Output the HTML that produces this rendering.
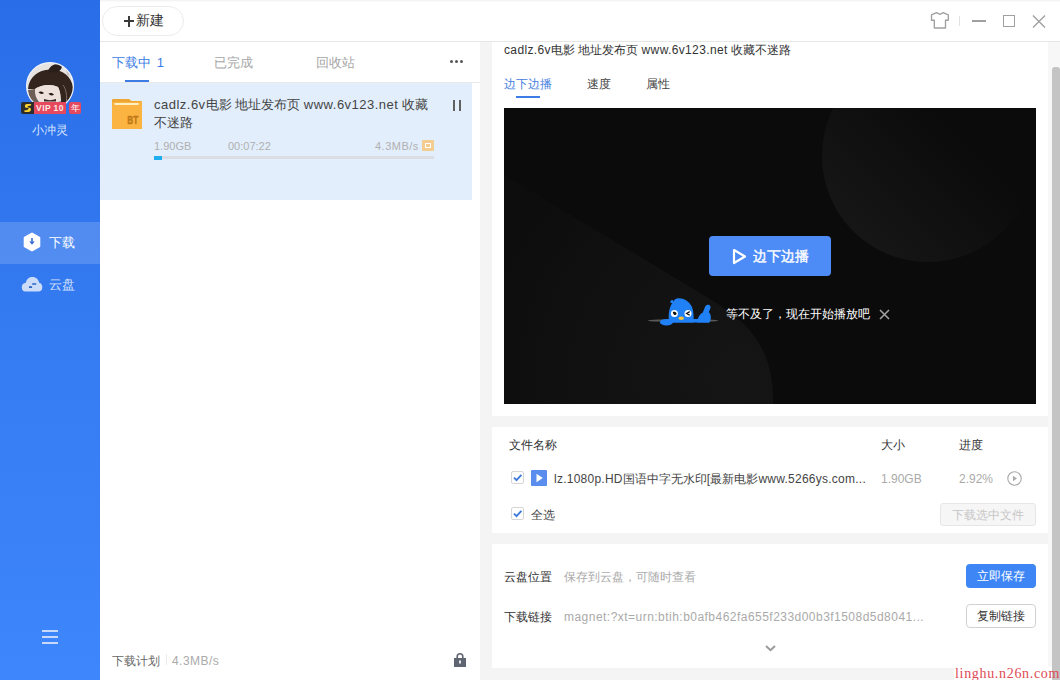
<!DOCTYPE html>
<html><head><meta charset="utf-8">
<style>
*{margin:0;padding:0;box-sizing:border-box}
html,body{width:1060px;height:680px;overflow:hidden;background:#fff;font-family:"Liberation Sans",sans-serif;}
.a{position:absolute;white-space:nowrap}
#side{position:absolute;left:0;top:0;width:100px;height:680px;background:linear-gradient(180deg,#296ee8 0%,#367cf2 55%,#3e86fb 100%)}
#hdr{position:absolute;left:100px;top:0;width:960px;height:42px;background:linear-gradient(180deg,#f0f0f0 0px,#f8f8f8 1px,#fff 2.5px,#fff 100%);border-bottom:1px solid #e6e6e6}
#mid{position:absolute;left:100px;top:42px;width:380px;height:638px;background:#fff}
#right{position:absolute;left:480px;top:42px;width:580px;height:638px;background:#f4f4f4;overflow:hidden}
.card{position:absolute;left:12px;width:556px;background:#fff}
.card>.a{margin-left:-1px}
</style></head><body>

<!-- SIDEBAR -->
<div id="side">
  <svg class="a" style="left:26px;top:62px" width="48" height="48" viewBox="0 0 48 48">
    <defs><clipPath id="cc"><circle cx="24" cy="24" r="23.5"/></clipPath></defs>
    <g clip-path="url(#cc)">
      <rect width="48" height="48" fill="#e7e3e1"/>
      <path d="M2 27 C3 15 12 8 24 7.5 C36 7 45 14 47 25 L47 48 L34 48 C36 40 35 31 32 25 C26 22 16 22 9 27 Z" fill="#33241e"/>
      <path d="M22 10 C23 4 29 1 35 2.5 C37 5 35 9 30 10.5 Z" fill="#2a1f1b"/>
      <path d="M40 6 C43 8 45 11 46 14 L41 13 Z" fill="#c9c2be"/>
      <path d="M9 27 C16 22 26 22 32 25 C34.5 30 35 35 33 39 C29 41 19 41 14 40 C11 36 8.5 32 9 27 Z" fill="#eee1db"/>
      <path d="M2 28 L9 27 C8.5 32 10 36 13 40 L4 40 Z" fill="#6e5e56"/>
      <path d="M12.5 30 C14.5 29 16.5 29.5 18 31 C16.5 32.3 14 32.3 12.5 30 Z" fill="#221816"/>
      <path d="M22.5 31.5 C24.5 30.5 26.8 31 28 32.5 C26.5 33.8 24 33.8 22.5 31.5 Z" fill="#221816"/>
      <path d="M18 37 C22 38.5 26 38.5 30 37 L30 39.5 L18 39.5 Z" fill="#3a2a26"/>
      <path d="M3 39 C12 41.5 28 42 42 38 L46 48 L2 48 Z" fill="#2a201d"/>
      <path d="M37 23 C40 27 41.5 34 40 42" stroke="#7d6d65" stroke-width="1" fill="none"/>
    </g>
    <circle cx="24" cy="24" r="23.4" fill="none" stroke="#eef3fb" stroke-width="1.2"/>
  </svg>
  <div class="a" style="left:21px;top:102px;width:13px;height:12px;background:#2d2d2d;border-radius:2px 0 0 2px"></div>
  <svg class="a" style="left:23px;top:103px" width="10" height="10" viewBox="0 0 10 10"><path d="M8.2 1 H4 Q1.8 1 1.8 3 Q1.8 5 4 5 H5.5 Q6 5 5.6 5.6 L4.8 6.6 Q4.4 7.2 3.8 7.2 H1.5 L1.5 9 H5.2 Q7.6 9 8 6.8 Q8.2 4.8 6 4.6 H4.6 Q4 4.6 4.4 4 L5 3.3 Q5.4 2.8 6 2.8 H7.7 Z" fill="#ffd42e"/></svg>
  <div class="a" style="left:34px;top:102px;width:32px;height:12px;background:#e6485d;color:#fff;font:bold 8.5px/12px 'Liberation Sans',sans-serif;text-align:center;letter-spacing:0.4px;color:#fde8e8">VIP 10</div>
  <div class="a" style="left:69px;top:102px;width:12px;height:12px;background:#e6485d;border-radius:2px;color:#fff;font-size:9px;line-height:12px;text-align:center">年</div>
  <div class="a" style="left:0;top:122px;width:100px;text-align:center;color:#dbe7ff;font-size:12px;line-height:17px">小冲灵</div>

  <div class="a" style="left:0;top:222px;width:100px;height:42px;background:rgba(255,255,255,0.16)"></div>
  <svg class="a" style="left:23px;top:232px" width="18" height="20" viewBox="0 0 18 20">
    <path d="M9 2 L16 5.8 L16 14.2 L9 18 L2 14.2 L2 5.8 Z" fill="#fff" stroke="#fff" stroke-width="2.6" stroke-linejoin="round"/>
    <path d="M9 6 V10.5" stroke="#3a6cd2" stroke-width="1.6" fill="none"/><path d="M6.2 9.6 L11.8 9.6 L9 12.8 Z" fill="#3a6cd2"/>
  </svg>
  <div class="a" style="left:49px;top:234px;color:#fff;font-size:13px;line-height:17px">下载</div>

  <svg class="a" style="left:21px;top:276px" width="22" height="16" viewBox="0 0 22 16">
    <path d="M4.5 15.6 C1.8 15.6 0.8 13.5 0.8 11.2 C0.8 8.6 2.6 7 4.8 6.8 C5.6 3 8.3 1 11.5 1 C15 1 17.6 3.3 18.1 6.8 C20.3 7.2 21.4 9.2 21.3 11.5 C21.2 14 19.8 15.6 17.5 15.6 Z" fill="#cbdcf9"/>
    <path d="M11.2 8 H15.2 M8 11.1 H11.1" stroke="#2f63c4" stroke-width="1.6"/>
  </svg>
  <div class="a" style="left:49px;top:276px;color:#d3e2fc;font-size:13px;line-height:17px">云盘</div>

  <div class="a" style="left:42px;top:630px;width:16px;height:1.5px;background:#c6d9fb"></div>
  <div class="a" style="left:42px;top:636px;width:16px;height:1.5px;background:#c6d9fb"></div>
  <div class="a" style="left:42px;top:642px;width:16px;height:1.5px;background:#c6d9fb"></div>
</div>

<!-- HEADER -->
<div id="hdr">
  <div class="a" style="left:2px;top:6px;width:82px;height:30px;border:1px solid #ececec;border-radius:15px"></div>
  <div class="a" style="left:24px;top:20px;width:10px;height:1.6px;background:#3a3a3a"></div>
  <div class="a" style="left:28.2px;top:16px;width:1.6px;height:10.5px;background:#3a3a3a"></div>
  <div class="a" style="left:36px;top:11px;color:#333;font-size:14px;line-height:19px">新建</div>

  <svg class="a" style="left:830px;top:11px" width="20" height="19" viewBox="0 0 20 19">
    <path d="M6.6 1.6 Q9.9 4.8 13.2 1.6 L18.3 3.8 L18.3 9.2 L15.5 9.2 L15.5 17 L4.3 17 L4.3 9.2 L1.5 9.2 L1.5 3.8 Z" fill="none" stroke="#a0a0a0" stroke-width="1.35" stroke-linejoin="round"/>
  </svg>
  <div class="a" style="left:859px;top:16px;width:1px;height:10px;background:#e2e2e2"></div>
  <div class="a" style="left:871.5px;top:20.3px;width:14.5px;height:1.4px;background:#a0a0a0"></div>
  <div class="a" style="left:903px;top:15px;width:12px;height:12px;border:1.4px solid #a0a0a0"></div>
  <svg class="a" style="left:932px;top:15px" width="14" height="13" viewBox="0 0 14 13"><path d="M1 0.5 L13 12.5 M13 0.5 L1 12.5" stroke="#a0a0a0" stroke-width="1.4"/></svg>
</div>

<!-- MIDDLE -->
<div id="mid">
  <div class="a" style="left:0;top:0;width:380px;height:41px;border-bottom:1px solid #e9e9e9"></div>
  <div class="a" style="left:12px;top:12px;color:#3d7ce4;font-size:13px;line-height:17px">下载中 <span style="margin-left:2px">1</span></div>
  <div class="a" style="left:25px;top:38px;width:24px;height:2px;background:#3d7ce4"></div>
  <div class="a" style="left:114px;top:12px;color:#a6a6a6;font-size:13px;line-height:17px">已完成</div>
  <div class="a" style="left:216px;top:12px;color:#a6a6a6;font-size:13px;line-height:17px">回收站</div>
  <div class="a" style="left:350px;top:18px;width:3px;height:3px;background:#555;border-radius:2px"></div>
  <div class="a" style="left:355px;top:18px;width:3px;height:3px;background:#555;border-radius:2px"></div>
  <div class="a" style="left:360px;top:18px;width:3px;height:3px;background:#555;border-radius:2px"></div>

  <div class="a" style="left:0;top:41px;width:372px;height:117px;background:#e2eefc"></div>
  <svg class="a" style="left:12px;top:57px" width="30" height="30" viewBox="0 0 30 30">
    <path d="M0 1 Q0 0 1 0 H17 L19.5 2 H29 Q30 2 30 3 V29 Q30 30 29 30 H1 Q0 30 0 29 Z" fill="#eea532"/>
    <rect x="0" y="3" width="30" height="27" rx="0.5" fill="#fbb442"/>
    <rect x="2.5" y="4" width="24" height="2" fill="#fff0c4"/>
    <text x="0" y="0" style="font-family:'Liberation Sans';font-weight:700;font-size:10.5px" fill="#bf7816" stroke="#bf7816" stroke-width="0.4" text-anchor="middle" transform="translate(20.8,25.3) scale(0.78,1)">BT</text>
  </svg>
  <div class="a" style="left:54px;top:54px;color:#444;font-size:13px;line-height:18px"><span style="letter-spacing:0.49px">cadlz.6v</span>电影 地址发布页 <span style="letter-spacing:0.49px">www.6v123.net</span> 收藏<br>不迷路</div>
  <div class="a" style="left:54px;top:97px;color:#b0b0b0;font-size:11px;line-height:14px">1.90GB</div>
  <div class="a" style="left:128px;top:97px;color:#b0b0b0;font-size:11px;line-height:14px">00:07:22</div>
  <div class="a" style="left:275px;top:97px;color:#b0b0b0;font-size:11px;line-height:14px;letter-spacing:0.5px">4.3MB/s</div>
  <div class="a" style="left:322px;top:98px;width:12px;height:11px;background:#f3cd90;border-radius:1px"></div>
  <div class="a" style="left:325px;top:101px;width:6px;height:5px;border:1px solid #fff"></div>
  <div class="a" style="left:54px;top:114px;width:280px;height:3px;background:#dadee4"></div>
  <div class="a" style="left:54px;top:114px;width:8px;height:3.5px;background:#1eaef0"></div>
  <div class="a" style="left:352.5px;top:58px;width:2.2px;height:11px;background:#606060"></div>
  <div class="a" style="left:359.3px;top:58px;width:2.2px;height:11px;background:#606060"></div>

  <div class="a" style="left:12px;top:611px;color:#666;font-size:12px;line-height:16px">下载计划</div>
  <div class="a" style="left:66px;top:612px;width:1px;height:11px;background:#ececec"></div>
  <div class="a" style="left:72px;top:611px;color:#aaa;font-size:12px;line-height:16px;letter-spacing:0.45px">4.3MB/s</div>
  <svg class="a" style="left:353px;top:610px" width="14" height="16" viewBox="0 0 14 16">
    <path d="M4.2 6.5 V4.6 A2.8 2.8 0 0 1 9.8 4.6 V6.5" stroke="#5f6672" stroke-width="1.6" fill="none"/>
    <rect x="1" y="6" width="12" height="9" fill="#5f6672"/>
    <rect x="6" y="8.5" width="2" height="3" fill="#e8eaf0"/>
  </svg>
</div>

<!-- RIGHT -->
<div id="right">
  <div class="card" style="top:-10px;height:384px">
    <div class="a" style="left:13px;top:10px;color:#333;font-size:12px;line-height:17px"><span style="letter-spacing:0.36px">cadlz.6v</span>电影 地址发布页 <span style="letter-spacing:0.36px">www.6v123.net</span> 收藏不迷路</div>
    <div class="a" style="left:13px;top:44px;color:#4580e0;font-size:12px;line-height:17px">边下边播</div>
    <div class="a" style="left:25px;top:64px;width:24px;height:2px;background:#3d7ce4"></div>
    <div class="a" style="left:96px;top:44px;color:#444;font-size:12px;line-height:17px">速度</div>
    <div class="a" style="left:155px;top:44px;color:#444;font-size:12px;line-height:17px">属性</div>

    <div class="a" style="left:13px;top:76px;width:532px;height:296px;background:#0b0b0b;overflow:hidden">
      <svg class="a" style="left:0;top:0" width="532" height="296" viewBox="0 0 532 296">
        <defs>
          <linearGradient id="g1" x1="0.1" y1="0.9" x2="0.8" y2="0.2"><stop offset="0" stop-color="#171717"/><stop offset="0.75" stop-color="#0b0b0b"/><stop offset="1" stop-color="#0b0b0b"/></linearGradient>
          <radialGradient id="g2" gradientUnits="userSpaceOnUse" cx="235" cy="270" r="260"><stop offset="0" stop-color="#151515"/><stop offset="0.6" stop-color="#111111"/><stop offset="1" stop-color="#0d0d0d"/></radialGradient>
        </defs>
        <circle cx="424" cy="48" r="106" fill="url(#g1)"/>
        <path d="M0 67 L206 191 C250 217 270 245 269 296 L0 296 Z" fill="url(#g2)"/>
      </svg>
      <div class="a" style="left:205px;top:128px;width:122px;height:40px;background:#4d8bf6;border-radius:4px"></div>
      <svg class="a" style="left:228px;top:140px" width="15" height="17" viewBox="0 0 15 17"><path d="M2 2 L13 8.5 L2 15 Z" fill="none" stroke="#fff" stroke-width="2.2" stroke-linejoin="round"/></svg>
      <div class="a" style="left:249px;top:139px;color:#fff;font-size:14px;line-height:19px;-webkit-text-stroke:0.35px #fff">边下边播</div>

      <svg class="a" style="left:143px;top:188px" width="72" height="32" viewBox="0 0 72 32">
        <ellipse cx="36" cy="24.6" rx="35.5" ry="1.4" fill="#585858"/>
        <path d="M22 26.5 C21 18 22.5 10 26 6 C27 4 28 3 30 2.5 C35.5 1.5 42 5 45 11 C46.6 15 46.9 21 46.6 26.5 Z" fill="#2080f6"/>
        <path d="M23.5 7 C23 5 24 3.5 25.5 4 C26.5 4.5 26.5 6 26 7 Z" fill="#2080f6"/>
        <ellipse cx="19.5" cy="26.2" rx="6.5" ry="3.3" fill="#2080f6"/>
        <rect x="24" y="23" width="38" height="3.5" fill="#2080f6"/>
        <path d="M49.8 26.5 C50.8 21.5 52.6 18.2 55.8 16.6 L58.2 10.6 C59.2 8.6 62 8.3 63.2 9.7 C64.2 11.3 62.8 14 61.8 16.2 C64.3 18 64.5 23 62.5 26.5 Z" fill="#2080f6"/>
        <circle cx="27.4" cy="17.4" r="3.5" fill="#fff"/>
        <path d="M25.8 16.2 C26.5 19.5 29 20 29.6 17.6 C29 15.8 27.5 15.2 25.8 16.2 Z" fill="#111"/>
        <circle cx="41" cy="17.4" r="3.5" fill="#fff"/>
        <path d="M42.8 15.6 L39.6 17.5 L42.8 19.3" stroke="#111" stroke-width="1.3" fill="none"/>
        <ellipse cx="34.2" cy="22.3" rx="2.8" ry="1.7" fill="#f3c43a"/>
      </svg>
      <div class="a" style="left:222px;top:198px;color:#fff;font-size:12px;line-height:16px">等不及了，现在开始播放吧</div>
      <svg class="a" style="left:375px;top:201px" width="11" height="11" viewBox="0 0 11 11"><path d="M1 1 L10 10 M10 1 L1 10" stroke="#a4a4a4" stroke-width="1.5"/></svg>
    </div>
  </div>

  <div class="card" style="top:385px;height:106px">
    <div class="a" style="left:18px;top:10px;color:#333;font-size:12px;line-height:17px">文件名称</div>
    <div class="a" style="left:390px;top:10px;color:#333;font-size:12px;line-height:17px">大小</div>
    <div class="a" style="left:468px;top:10px;color:#333;font-size:12px;line-height:17px">进度</div>
    <div class="a" style="left:20px;top:44px;width:13px;height:13px;border:1px solid #d6d6d6;border-radius:2px"></div>
    <svg class="a" style="left:20px;top:44px" width="13" height="13" viewBox="0 0 13 13"><path d="M3 6.6 L5.5 9.2 L10.4 3.8" stroke="#3f7bdc" stroke-width="1.9" fill="none"/></svg>
    <div class="a" style="left:40px;top:43px;width:16px;height:16px;background:#5b8def;border-radius:1px"></div>
    <svg class="a" style="left:40px;top:43px" width="16" height="16" viewBox="0 0 16 16"><path d="M5.5 3.8 L11.8 8 L5.5 12.2 Z" fill="#fff"/></svg>
    <div class="a" style="left:63px;top:44px;color:#444;font-size:12px;line-height:17px"><span style="letter-spacing:0.25px">lz.1080p.HD</span>国语中字无水印<span style="letter-spacing:0.25px">[</span>最新电影<span style="letter-spacing:0.25px">www.5266ys.com...</span></div>
    <div class="a" style="left:390px;top:44px;color:#aaa;font-size:12px;line-height:17px">1.90GB</div>
    <div class="a" style="left:468px;top:44px;color:#aaa;font-size:12px;line-height:17px">2.92%</div>
    <svg class="a" style="left:516px;top:44px" width="15" height="15" viewBox="0 0 15 15"><circle cx="7.5" cy="7.5" r="6.7" stroke="#aaa" stroke-width="1.1" fill="none"/><path d="M6 4.8 L10 7.5 L6 10.2 Z" fill="#aaa"/></svg>

    <div class="a" style="left:20px;top:80px;width:13px;height:13px;border:1px solid #d6d6d6;border-radius:2px"></div>
    <svg class="a" style="left:20px;top:80px" width="13" height="13" viewBox="0 0 13 13"><path d="M3 6.6 L5.5 9.2 L10.4 3.8" stroke="#3f7bdc" stroke-width="1.9" fill="none"/></svg>
    <div class="a" style="left:40px;top:80px;color:#444;font-size:12px;line-height:17px">全选</div>
    <div class="a" style="left:449px;top:76px;width:96px;height:23px;background:#f6f6f6;border:1px solid #e6e6e6;border-radius:3px;color:#c6c6c6;font-size:12px;line-height:23px;text-align:center">下载选中文件</div>
  </div>

  <div class="card" style="top:502px;height:124px">
    <div class="a" style="left:13px;top:25px;color:#333;font-size:12px;line-height:17px">云盘位置</div>
    <div class="a" style="left:73px;top:25px;color:#aaa;font-size:12px;line-height:17px">保存到云盘，可随时查看</div>
    <div class="a" style="left:475px;top:20px;width:70px;height:24px;background:#3e86f5;border-radius:4px;color:#fff;font-size:12px;line-height:24px;text-align:center">立即保存</div>
    <div class="a" style="left:13px;top:64.5px;color:#333;font-size:12px;line-height:17px">下载链接</div>
    <div class="a" style="left:73px;top:64.5px;color:#aaa;font-size:12px;line-height:17px;letter-spacing:0.47px">magnet:?xt=urn:btih:b0afb462fa655f233d00b3f1508d5d8041...</div>
    <div class="a" style="left:475px;top:60px;width:70px;height:24px;background:#fff;border:1px solid #d2d2d2;border-radius:4px;color:#333;font-size:12px;line-height:23px;text-align:center">复制链接</div>
    <svg class="a" style="left:274px;top:101px" width="11" height="7" viewBox="0 0 11 7"><path d="M1 1 L5.5 5.3 L10 1" stroke="#999" stroke-width="1.9" fill="none"/></svg>
  </div>

  <div class="a" style="left:568px;top:0;width:12px;height:638px;background:#f7f7f7"></div>
  <div class="a" style="left:572px;top:25px;width:8px;height:620px;background:#c4c4c4;border-radius:3px 3px 0 0"></div>
</div>

<div class="a" style="left:954px;top:667px;width:98px;height:13px;background:#fff;overflow:visible"><div class="a" style="left:1px;top:-1px;color:#de4a55;font-family:'Liberation Serif',serif;font-size:14px;line-height:16px;letter-spacing:0.68px">linghu.n26n.com</div></div>
</body></html>
